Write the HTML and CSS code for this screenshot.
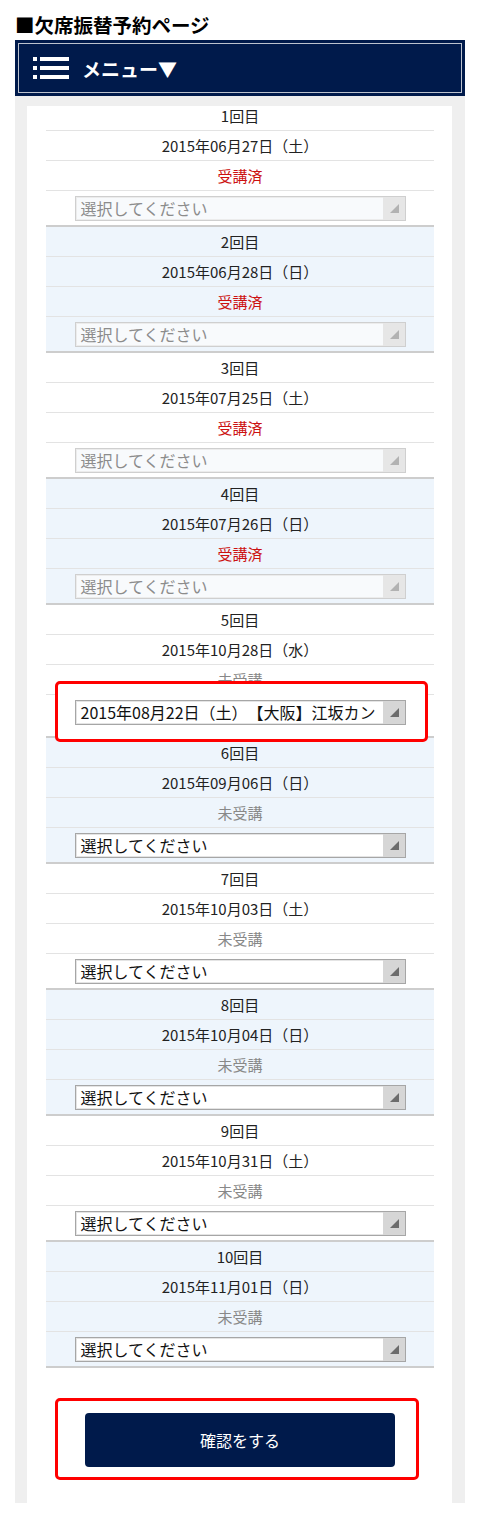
FILE: index.html
```html
<!DOCTYPE html>
<html lang="ja">
<head>
    <meta charset="UTF-8">
    <meta name="viewport" content="width=device-width, initial-scale=1.0">
    <title>欠席振替予約ページ</title>
    <link rel="stylesheet" href="styles.css">
</head>
<body>
    <h1 class="page-title">■欠席振替予約ページ</h1>
    <div class="menu-bar">
        <svg class="menu-icon" viewBox="0 0 36 22" width="36" height="22">
            <rect x="0" y="0" width="4" height="4" fill="#fff"/>
            <rect x="7" y="0" width="29" height="4" fill="#fff"/>
            <rect x="0" y="9" width="4" height="4" fill="#fff"/>
            <rect x="7" y="9" width="29" height="4" fill="#fff"/>
            <rect x="0" y="18" width="4" height="4" fill="#fff"/>
            <rect x="7" y="18" width="29" height="4" fill="#fff"/>
        </svg>
        <span>メニュー▼</span>
    </div>

    <div class="frame">
        <div class="panel">
            <div class="lesson-list">

                <div class="lesson">
                    <div class="row">1回目</div>
                    <div class="row">2015年06月27日（土）</div>
                    <div class="row status-done">受講済</div>
                    <div class="row row-select">
                        <div class="sel is-disabled">
                            <span class="sel-text">選択してください</span>
                            <span class="sel-arrow"><svg viewBox="0 0 22 23" width="22" height="23"><polygon points="16,7 16,16 7,16"/></svg></span>
                        </div>
                    </div>
                </div>

                <div class="lesson alt">
                    <div class="row">2回目</div>
                    <div class="row">2015年06月28日（日）</div>
                    <div class="row status-done">受講済</div>
                    <div class="row row-select">
                        <div class="sel is-disabled">
                            <span class="sel-text">選択してください</span>
                            <span class="sel-arrow"><svg viewBox="0 0 22 23" width="22" height="23"><polygon points="16,7 16,16 7,16"/></svg></span>
                        </div>
                    </div>
                </div>

                <div class="lesson">
                    <div class="row">3回目</div>
                    <div class="row">2015年07月25日（土）</div>
                    <div class="row status-done">受講済</div>
                    <div class="row row-select">
                        <div class="sel is-disabled">
                            <span class="sel-text">選択してください</span>
                            <span class="sel-arrow"><svg viewBox="0 0 22 23" width="22" height="23"><polygon points="16,7 16,16 7,16"/></svg></span>
                        </div>
                    </div>
                </div>

                <div class="lesson alt">
                    <div class="row">4回目</div>
                    <div class="row">2015年07月26日（日）</div>
                    <div class="row status-done">受講済</div>
                    <div class="row row-select">
                        <div class="sel is-disabled">
                            <span class="sel-text">選択してください</span>
                            <span class="sel-arrow"><svg viewBox="0 0 22 23" width="22" height="23"><polygon points="16,7 16,16 7,16"/></svg></span>
                        </div>
                    </div>
                </div>

                <div class="lesson">
                    <div class="row">5回目</div>
                    <div class="row">2015年10月28日（水）</div>
                    <div class="row status-todo">未受講</div>
                    <div class="row row-select is-marked">
                        <div class="mark"></div>
                        <div class="sel">
                            <span class="sel-text">2015年08月22日（土）【大阪】江坂カン</span>
                            <span class="sel-arrow"><svg viewBox="0 0 22 23" width="22" height="23"><polygon points="16,7 16,16 7,16"/></svg></span>
                        </div>
                    </div>
                </div>

                <div class="lesson alt">
                    <div class="row">6回目</div>
                    <div class="row">2015年09月06日（日）</div>
                    <div class="row status-todo">未受講</div>
                    <div class="row row-select">
                        <div class="sel">
                            <span class="sel-text">選択してください</span>
                            <span class="sel-arrow"><svg viewBox="0 0 22 23" width="22" height="23"><polygon points="16,7 16,16 7,16"/></svg></span>
                        </div>
                    </div>
                </div>

                <div class="lesson">
                    <div class="row">7回目</div>
                    <div class="row">2015年10月03日（土）</div>
                    <div class="row status-todo">未受講</div>
                    <div class="row row-select">
                        <div class="sel">
                            <span class="sel-text">選択してください</span>
                            <span class="sel-arrow"><svg viewBox="0 0 22 23" width="22" height="23"><polygon points="16,7 16,16 7,16"/></svg></span>
                        </div>
                    </div>
                </div>

                <div class="lesson alt">
                    <div class="row">8回目</div>
                    <div class="row">2015年10月04日（日）</div>
                    <div class="row status-todo">未受講</div>
                    <div class="row row-select">
                        <div class="sel">
                            <span class="sel-text">選択してください</span>
                            <span class="sel-arrow"><svg viewBox="0 0 22 23" width="22" height="23"><polygon points="16,7 16,16 7,16"/></svg></span>
                        </div>
                    </div>
                </div>

                <div class="lesson">
                    <div class="row">9回目</div>
                    <div class="row">2015年10月31日（土）</div>
                    <div class="row status-todo">未受講</div>
                    <div class="row row-select">
                        <div class="sel">
                            <span class="sel-text">選択してください</span>
                            <span class="sel-arrow"><svg viewBox="0 0 22 23" width="22" height="23"><polygon points="16,7 16,16 7,16"/></svg></span>
                        </div>
                    </div>
                </div>

                <div class="lesson alt">
                    <div class="row">10回目</div>
                    <div class="row">2015年11月01日（日）</div>
                    <div class="row status-todo">未受講</div>
                    <div class="row row-select">
                        <div class="sel">
                            <span class="sel-text">選択してください</span>
                            <span class="sel-arrow"><svg viewBox="0 0 22 23" width="22" height="23"><polygon points="16,7 16,16 7,16"/></svg></span>
                        </div>
                    </div>
                </div>

            </div>

            <div class="confirm-box">
                <button class="confirm-btn">確認をする</button>
            </div>
        </div>
    </div>
</body>
</html>
```

FILE: styles.css
```css
body {
    margin: 0;
    padding: 0 15px;
    background: #fff;
    font-family: "Noto Sans CJK JP", "Noto Sans", sans-serif;
    text-spacing-trim: space-all;
}
.page-title {
    margin: 0;
    padding-top: 10px;
    font-size: 19.5px;
    line-height: 30px;
    font-weight: bold;
    color: #000;
}
.menu-bar {
    display: flex;
    align-items: center;
    height: 56px;
    box-sizing: border-box;
    padding-left: 15px;
    background: #001a4b;
    border: 3px solid #001a4b;
    box-shadow: inset 0 0 0 1px #bcc2ce;
    color: #fff;
    font-size: 19px;
    font-weight: bold;
}
.menu-icon {
    margin-right: 13px;
}
.frame {
    background: #efefef;
    padding: 10px 13px 0 12px;
}
.panel {
    background: #fff;
    padding: 0 18px 23px 19px;
    overflow: hidden;
}
.lesson-list {
    margin-top: -5px;
}
.lesson.alt {
    background: #eef5fc;
}
.row {
    height: 30px;
    box-sizing: border-box;
    border-bottom: 1px solid #e3e3e3;
    text-align: center;
    font-size: 15px;
    line-height: 29px;
    color: #222;
}
.status-done {
    color: #cc1111;
}
.status-todo {
    color: #888;
}
.row-select {
    height: auto;
    padding: 5px 0 4px;
    border-bottom: 2px solid #cdcdcd;
    line-height: normal;
}
.row-select.is-marked {
    position: relative;
    padding-bottom: 11px;
}
.mark {
    position: absolute;
    left: 9px;
    top: -14px;
    width: 373px;
    height: 61px;
    box-sizing: border-box;
    border: 3px solid #ff0000;
    border-radius: 5px;
    background: #fff;
}
.sel {
    display: flex;
    width: 331px;
    height: 25px;
    box-sizing: border-box;
    margin: 0 auto;
    border: 1px solid #a6a6a6;
    box-shadow: inset 0 0 0 1px #e4e4e4;
    background: #fff;
    color: #111;
}
.is-marked .sel {
    position: relative;
    z-index: 1;
}
.sel-text {
    flex: 1;
    overflow: hidden;
    white-space: nowrap;
    margin-right: 4px;
    padding-left: 5px;
    font-size: 16px;
    line-height: 23px;
    text-align: left;
}
.sel-arrow {
    display: flex;
    width: 22px;
    background: #d6d6d6;
}
.sel-arrow polygon {
    fill: #6c6c6c;
}
.sel.is-disabled {
    border-color: #cfcfcf;
    box-shadow: inset 0 0 0 1px #ececec;
    background: #f8fafc;
    color: #8c8c8c;
}
.sel.is-disabled .sel-arrow {
    background: #e6e6e6;
}
.sel.is-disabled polygon {
    fill: #b2b2b2;
}
.confirm-box {
    width: 364px;
    box-sizing: border-box;
    margin: 30px 0 0 9px;
    padding: 12px 21px 10px 27px;
    border: 3px solid #ff0000;
    border-radius: 5px;
}
.confirm-btn {
    display: block;
    width: 310px;
    height: 54px;
    background: #001a4b;
    color: #fff;
    border: none;
    border-radius: 4px;
    font-family: inherit;
    font-size: 16px;
}
```
